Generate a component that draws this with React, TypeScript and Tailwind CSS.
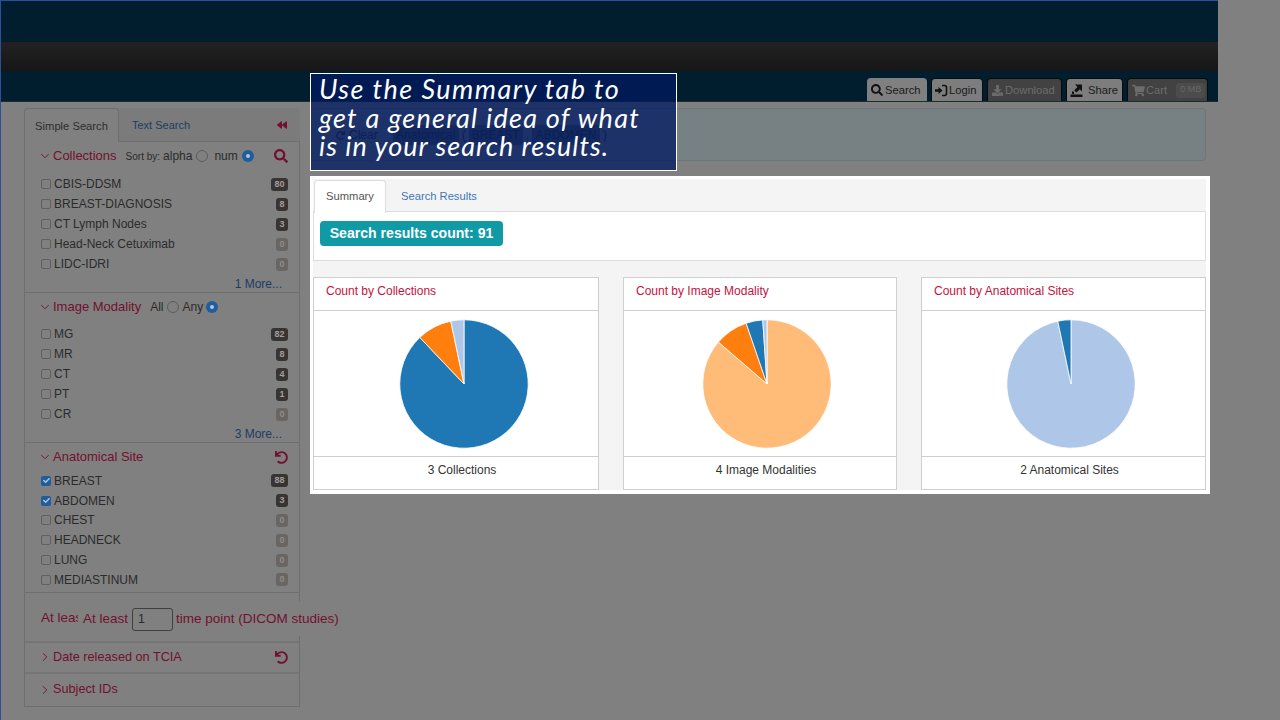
import React from "react";
import { ChevronDown, ChevronRight } from "lucide-react";
import { FaBackward, FaCheck, FaDownload, FaSearch, FaShoppingCart, FaUndo } from "react-icons/fa";

type Row = { name: string; count: number; checked?: boolean };

const collections: Row[] = [
  { name: "CBIS-DDSM", count: 80 },
  { name: "BREAST-DIAGNOSIS", count: 8 },
  { name: "CT Lymph Nodes", count: 3 },
  { name: "Head-Neck Cetuximab", count: 0 },
  { name: "LIDC-IDRI", count: 0 },
];
const modalities: Row[] = [
  { name: "MG", count: 82 },
  { name: "MR", count: 8 },
  { name: "CT", count: 4 },
  { name: "PT", count: 1 },
  { name: "CR", count: 0 },
];
const sites: Row[] = [
  { name: "BREAST", count: 88, checked: true },
  { name: "ABDOMEN", count: 3, checked: true },
  { name: "CHEST", count: 0 },
  { name: "HEADNECK", count: 0 },
  { name: "LUNG", count: 0 },
  { name: "MEDIASTINUM", count: 0 },
];

const Radio = ({ on }: { on?: boolean }) =>
  on ? (
    <span className="flex h-[12px] w-[12px] items-center justify-center rounded-full bg-[#1f5d9e]">
      <span className="h-[4px] w-[4px] rounded-full bg-[#b5c4d6]" />
    </span>
  ) : (
    <span className="block h-[12px] w-[12px] rounded-full border border-[#5c5c5c]" />
  );

const FacetRow = ({ row, tight }: { row: Row; tight?: boolean }) => (
  <div className={`flex items-center pl-[16px] pr-[11px] text-[12px] text-[#2b2b2b] ${tight ? "h-[19.8px]" : "h-[20px]"}`}>
    {row.checked ? (
      <span className="mr-[3px] flex h-[10px] w-[10px] items-center justify-center rounded-[2px] bg-[#1f5d9e] text-[#b5c4d6]">
        <FaCheck size={7} />
      </span>
    ) : (
      <span className="mr-[3px] h-[10px] w-[10px] rounded-[2px] border border-[#5f5f5f]" />
    )}
    <span className="flex-1">{row.name}</span>
    <span
      className={`flex h-[13px] items-center justify-center rounded-[3px] text-[9px] font-bold leading-none ${
        row.count > 9 ? "w-[17px]" : "w-[12px]"
      } ${row.count === 0 ? "bg-[#696563] text-[#8e8c8a]" : "bg-[#393434] text-[#a09e9e]"}`}
    >
      {row.count}
    </span>
  </div>
);

const More = ({ label }: { label: string }) => (
  <div className="mt-[1px] h-[18px] pr-[17px] text-right text-[12px] leading-[18px] text-[#1c3d63]">{label}</div>
);

const Heading = ({ title, open = true }: { title: string; open?: boolean }) => (
  <span className={`flex items-center text-[#72102f] ${open ? "text-[13px]" : "text-[12.7px]"}`}>
    {open ? (
      <ChevronDown size={14} strokeWidth={1.6} className="ml-[13px] mr-[1px]" />
    ) : (
      <ChevronRight size={14} strokeWidth={1.6} className="ml-[13px] mr-[1px]" />
    )}
    {title}
  </span>
);

const Sidebar = () => (
  <aside className="ml-[24px] mt-[6px] w-[276px]">
    <div className="flex h-[33px] items-center rounded-t-[4px] bg-[#7b7b7b]">
      <div className="z-10 flex h-[34px] w-[95px] items-center justify-center self-start rounded-t-[4px] border border-b-0 border-[#6e6e6e] bg-[#808080] pt-[1px] text-[11.2px] text-[#2e2e2e]">
        Simple Search
      </div>
      <span className="ml-[13px] flex-1 pt-[2px] text-[11px] text-[#1c3d63]">Text Search</span>
      <FaBackward size={10} className="mr-[13px] text-[#72102f]" />
    </div>
    <div className="border border-[#6e6e6e]">
      <section className="h-[151px] border-b border-[#6e6e6e] pt-[4px]">
        <div className="flex h-[20px] items-center">
          <Heading title="Collections" />
          <span className="ml-[9px] flex items-center text-[10px] text-[#2b2b2b]">
            Sort by:
            <span className="ml-[3px] text-[12px]">alpha</span>
            <span className="ml-[4px]"><Radio /></span>
            <span className="ml-[6px] text-[12px]">num</span>
            <span className="ml-[4px]"><Radio on /></span>
          </span>
          <FaSearch size={14} className="ml-auto mr-[11px] text-[#72102f]" />
        </div>
        <div className="mt-[8px]">
          {collections.map((r) => <FacetRow key={r.name} row={r} />)}
        </div>
        <More label="1 More..." />
      </section>
      <section className="h-[150px] border-b border-[#6e6e6e] pt-[4px]">
        <div className="flex h-[20px] items-center">
          <Heading title="Image Modality" />
          <span className="ml-[9px] flex items-center text-[12px] text-[#2b2b2b]">
            All
            <span className="ml-[3px]"><Radio /></span>
            <span className="ml-[4px]">Any</span>
            <span className="ml-[3px]"><Radio on /></span>
          </span>
        </div>
        <div className="mt-[7px]">
          {modalities.map((r) => <FacetRow key={r.name} row={r} />)}
        </div>
        <More label="3 More..." />
      </section>
      <section className="h-[150px] border-b border-[#6e6e6e] pt-[4px]">
        <div className="flex h-[20px] items-center">
          <Heading title="Anatomical Site" />
          <FaUndo size={13} className="ml-auto mr-[11px] text-[#72102f]" />
        </div>
        <div className="mt-[4px]">
          {sites.map((r) => <FacetRow key={r.name} row={r} tight />)}
        </div>
      </section>
      <section className="flex h-[50px] items-center border-b-2 border-[#757575] pl-[16px] pt-[4px] text-[13.5px] text-[#72102f]">
        <span className="-mt-[1px] w-[37px] shrink-0 overflow-hidden whitespace-nowrap">At least</span>
        <div className="relative z-10 flex h-[34px] w-[262px] shrink-0 items-center whitespace-nowrap bg-[#808080] pl-[5px]">
          At least
          <span className="ml-[4px] mr-[3px] flex h-[23px] w-[41px] items-center rounded-[3px] border border-[#3f3f3f] pl-[5px] text-[12.5px] text-[#2b2b2b]">
            1
          </span>
          time point (DICOM studies)
        </div>
      </section>
      <section className="flex h-[31px] items-center border-b-2 border-[#757575]">
        <Heading title="Date released on TCIA" open={false} />
        <FaUndo size={13} className="ml-auto mr-[11px] text-[#72102f]" />
      </section>
      <section className="flex h-[32px] items-center">
        <Heading title="Subject IDs" open={false} />
      </section>
    </div>
  </aside>
);

const LoginIcon = () => (
  <svg width="14" height="13" viewBox="0 0 14 13" fill="none" className="mr-[1px]">
    <path d="M8 1.5h2.5a2 2 0 0 1 2 2v6a2 2 0 0 1-2 2H8" stroke="#111" strokeWidth="1.6" />
    <path d="M1 5.3h3.5V3l4 3.5-4 3.5V7.7H1z" fill="#111" />
  </svg>
);

const ShareIcon = () => (
  <svg width="13" height="13" viewBox="0 0 13 13" className="mr-[5px]">
    <path d="M5 0.5h7v7l-2.2-2.2-3.3 3.3-2.3-2.3 3.3-3.3z" fill="#111" />
    <rect x="2" y="7.5" width="2" height="2.5" fill="#111" />
    <rect x="0.5" y="10.5" width="12" height="2.5" fill="#111" />
  </svg>
);

const NavTab = ({ children, tone, width }: { children: React.ReactNode; tone: "active" | "light" | "off"; width: string }) => (
  <div
    className={`flex h-[23px] items-center rounded-t-[4px] border border-b-0 text-[11.2px] ${width} ${
      tone === "active"
        ? "border-[#808080] bg-[#808080] text-[#1a1a1a]"
        : tone === "light"
          ? "border-[#0a0a0a] bg-[#7d7d7d] text-[#1a1a1a]"
          : "border-[#0a0a0a] bg-[#424242] text-[#6c6c6c]"
    }`}
  >
    {children}
  </div>
);

const Header = () => (
  <header className="w-[1218px] border-t border-[#2d4f9a]">
    <div className="h-[41px] bg-[#001e2e]" />
    <div className="h-[29px] bg-gradient-to-b from-[#222222] to-[#161616]" />
    <div className="flex h-[31px] items-end justify-end border-b border-[#1d2b33] bg-[#001e2e] pr-[10px]">
      <NavTab tone="active" width="w-[60px] pl-[3px]">
        <FaSearch size={12} className="mr-[2px] text-[#111]" />
        Search
      </NavTab>
      <span className="w-[4px]" />
      <NavTab tone="light" width="w-[52px] pl-[2px]">
        <LoginIcon />
        Login
      </NavTab>
      <span className="w-[4px]" />
      <NavTab tone="off" width="w-[75px] pl-[4px]">
        <FaDownload size={11} className="mr-[2px]" />
        Download
      </NavTab>
      <span className="w-[4px]" />
      <NavTab tone="light" width="w-[57px] pl-[3px]">
        <ShareIcon />
        Share
      </NavTab>
      <span className="w-[4px]" />
      <NavTab tone="off" width="w-[81px] pl-[4px]">
        <FaShoppingCart size={13} className="mr-[1px]" />
        Cart
        <span className="ml-[9px] flex h-[15px] w-[29px] items-center justify-center rounded-[3px] bg-[#4c4c4c] text-[9px] text-[#666666]">
          0 MB
        </span>
      </NavTab>
    </div>
  </header>
);

const QueryBox = () => (
  <div className="ml-[10px] mt-[6px] flex h-[53px] w-[896px] items-center rounded-[4px] border border-[#6b777b] bg-[#778083] pl-[25px] pt-[1px] text-[12px] text-[#2b3338]">
    <FaUndo size={9} className="mr-[4px] -scale-x-100" />
    <span className="mr-[15px]">Clear</span>
    <span className="flex h-[20px] w-[66px] items-center justify-center rounded-[3px] bg-[#4f5a60]">Anatomical</span>
    <span className="mx-[3px]">(</span>
    <span className="flex h-[20px] w-[54px] items-center justify-center rounded-[3px] bg-[#4f5a60]">BREAST</span>
    <span className="mx-[3px]">,</span>
    <span className="flex h-[20px] w-[68px] items-center justify-center rounded-[3px] bg-[#4f5a60]">ABDOMEN</span>
    <span className="ml-[3px]">)</span>
  </div>
);

const slicePath = (cx: number, cy: number, r: number, from: number, to: number) => {
  const a = (from - 90) * (Math.PI / 180);
  const b = (to - 90) * (Math.PI / 180);
  const large = to - from > 180 ? 1 : 0;
  return `M${cx} ${cy}L${cx + r * Math.cos(a)} ${cy + r * Math.sin(a)}A${r} ${r} 0 ${large} 1 ${cx + r * Math.cos(b)} ${cy + r * Math.sin(b)}Z`;
};

const Pie = ({ slices }: { slices: [number, string][] }) => {
  const total = slices.reduce((s, x) => s + x[0], 0);
  let at = 0;
  return (
    <svg width="130" height="130" viewBox="0 0 130 130">
      {slices.map(([v, color]) => {
        const from = at;
        at += (v / total) * 360;
        return <path key={color} d={slicePath(65, 65, 64.2, from, at)} fill={color} stroke="#ffffff" strokeWidth="0.8" />;
      })}
    </svg>
  );
};

const ChartCard = ({ title, footer, slices, width, shift }: { title: string; footer: string; slices: [number, string][]; width: string; shift: string }) => (
  <div className={`flex h-[213px] flex-col border border-[#cfcfcf] bg-white ${width}`}>
    <div className="h-[33px] border-b border-[#cfcfcf] pl-[12px] pt-[5px] text-[12px] leading-[16px] text-[#c2133f]">{title}</div>
    <div className={`flex h-[146px] items-center justify-center border-b border-[#cfcfcf] ${shift}`}>
      <Pie slices={slices} />
    </div>
    <div className="flex flex-1 items-center justify-center pb-[6px] pl-[12px] text-[12px] text-[#333333]">{footer}</div>
  </div>
);

const SummaryPanel = () => (
  <div className="absolute left-[310px] top-[176px] h-[318px] w-[900px] bg-white pl-[3px] pr-[4px] pt-[3px]">
    <div className="h-[311px] bg-[#f4f4f4]">
      <div className="flex h-[33px] items-start pt-[1px]">
        <div className="z-10 ml-[1px] flex h-[33px] w-[72px] items-center justify-center rounded-t-[4px] border border-b-0 border-[#dddddd] bg-white pb-[1px] text-[11.2px] text-[#555555]">
          Summary
        </div>
        <div className="ml-[15px] flex h-[32px] items-center text-[11.2px] text-[#3f76b5]">Search Results</div>
      </div>
      <div className="-mt-[1px] h-[50px] border border-[#dddddd] bg-white pl-[6px] pt-[9px]">
        <span className="inline-flex h-[25px] w-[183px] items-center justify-center rounded-[4px] bg-[#0f9aa6] pt-[1px] text-[14.1px] font-bold text-white">
          Search results count: 91
        </span>
      </div>
      <div className="mt-[16px] flex justify-between">
        <ChartCard
          title="Count by Collections"
          footer="3 Collections"
          width="w-[286px]"
          shift="pl-[15px]"
          slices={[[80, "#1f77b4"], [8, "#ff7f0e"], [3, "#aec7e8"]]}
        />
        <ChartCard
          title="Count by Image Modality"
          footer="4 Image Modalities"
          width="w-[274px]"
          shift="pl-[14px]"
          slices={[[82, "#ffbb78"], [8, "#ff7f0e"], [4, "#1f77b4"], [1, "#aec7e8"]]}
        />
        <ChartCard
          title="Count by Anatomical Sites"
          footer="2 Anatomical Sites"
          width="w-[285px]"
          shift="pl-[15px]"
          slices={[[88, "#aec7e8"], [3, "#1f77b4"]]}
        />
      </div>
    </div>
  </div>
);

const Callout = () => (
  <div className="absolute left-[310px] top-[73px] h-[98px] w-[367px] border border-white bg-[#001960]/[.76] pl-[8px] pt-[1px] font-['Lato',sans-serif] text-[27px] italic leading-[28.5px] text-white">
    <div className="tracking-[1.45px]">Use the Summary tab to</div>
    <div className="tracking-[1.27px]">get a general idea of what</div>
    <div className="tracking-[1px]">is in your search results.</div>
  </div>
);

export default function App() {
  return (
    <div className="relative h-[720px] w-[1280px] overflow-hidden bg-[#808080] font-['Liberation_Sans',Arial,sans-serif]">
      <Header />
      <div className="flex">
        <Sidebar />
        <QueryBox />
      </div>
      <SummaryPanel />
      <Callout />
      <div className="absolute left-0 top-0 h-[720px] w-px bg-[#2d4f9a]" />
    </div>
  );
}
